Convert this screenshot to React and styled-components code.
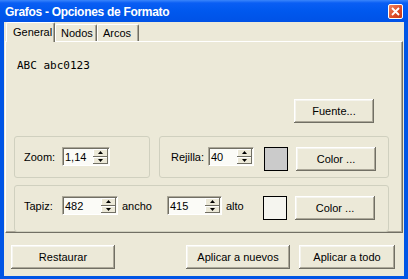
import styled, { createGlobalStyle } from "styled-components";

const Global = createGlobalStyle`
  html, body { margin: 0; padding: 0; background: #ece9d8; }
  body { font-family: "Liberation Sans", Arial, sans-serif; font-size: 11px; color: #000; }
`;

// window frame
const Window = styled.div`
  width: 408px;
  height: 279px;
  display: flex;
  flex-direction: column;
  background: #0055e5;
  box-sizing: border-box;
`;

const TitleBar = styled.div`
  height: 22px;
  flex: none;
  display: flex;
  align-items: center;
  justify-content: space-between;
  box-sizing: border-box;
  padding: 1px 5px 0 5px;
  background: linear-gradient(#3a85fb 0, #0a5ef4 3px, #0058ee 50%, #0052e6 100%);
  color: #fff;
  font-weight: bold;
  font-size: 12px;
  letter-spacing: -0.3px;
`;

const CloseBtn = styled.div`
  width: 13px;
  height: 13px;
  border: 1px solid #fff;
  border-radius: 2px;
  background: linear-gradient(135deg, #f0835f, #dc4a25 60%, #c2381a);
  display: flex;
  align-items: center;
  justify-content: center;
`;

const Body = styled.div`
  flex: 1;
  margin: 0 4px 3px 4px;
  background: #ece9d8;
  display: flex;
  flex-direction: column;
  padding: 0 1px 0 1px;
`;

// tabs
const TabRow = styled.div`
  height: 19px;
  display: flex;
  align-items: flex-end;
  padding-left: 1px;
  position: relative;
  z-index: 1;
`;

const Tab = styled.div`
  width: ${(p) => p.$w}px;
  height: ${(p) => (p.$active ? 20 : 17)}px;
  margin-bottom: ${(p) => (p.$active ? -1 : 0)}px;
  box-sizing: border-box;
  border-top: 1px solid #fff;
  border-left: 1px solid #fff;
  border-right: 1px solid #716f64;
  box-shadow: inset -1px 0 #aca899;
  border-radius: 2px 2px 0 0;
  background: #ece9d8;
  padding: ${(p) => (p.$active ? 3 : 2)}px 0 0 ${(p) => (p.$active ? 6 : 5)}px;
`;

const Panel = styled.div`
  height: 192px;
  box-sizing: border-box;
  border-top: 1px solid #fff;
  border-left: 1px solid #fff;
  border-right: 1px solid #716f64;
  border-bottom: 1px solid #716f64;
  box-shadow: inset -1px -1px #aca899;
  display: flex;
  flex-direction: column;
  padding: 0 13px 0 8px;
`;

const Sample = styled.div`
  margin: 17px 0 0 3px;
  font-family: "DejaVu Sans Mono", monospace;
  font-size: 11px;
  line-height: 13px;
`;

const FontRow = styled.div`
  display: flex;
  justify-content: flex-end;
  padding-right: 15px;
  margin-top: 27px;
`;

const Button = styled.button`
  width: ${(p) => p.$w || 80}px;
  height: 24px;
  flex: none;
  margin: 0;
  padding: 0;
  box-sizing: border-box;
  border: none;
  background: #ece9d8;
  font-family: "Liberation Sans", Arial, sans-serif;
  font-size: 11px;
  color: #000;
  box-shadow: inset -1px -1px #716f64, inset 1px 1px #fff, inset -2px -2px #aca899, inset 2px 2px #f5f4ee;
`;

const GroupRow = styled.div`
  display: flex;
  gap: 9px;
  margin-top: 13px;
`;

const Group = styled.div`
  width: ${(p) => (p.$w ? `${p.$w}px` : "auto")};
  flex: ${(p) => (p.$w ? "none" : 1)};
  height: 42px;
  box-sizing: border-box;
  border: 1px solid #d0d0bf;
  border-radius: 3px;
  margin-top: ${(p) => p.$mt || 0}px;
  display: flex;
  align-items: flex-start;
  padding: 10px 0 0 ${(p) => p.$pl}px;
`;

const Label = styled.div`
  width: ${(p) => p.$w}px;
  flex: none;
  box-sizing: border-box;
  padding-left: ${(p) => p.$pl || 0}px;
  height: 19px;
  line-height: 20px;
`;

const SpinBox = styled.div`
  width: ${(p) => p.$w}px;
  height: 19px;
  flex: none;
  box-sizing: border-box;
  background: #fbfbf7;
  border-top: 1px solid #aca899;
  border-left: 1px solid #aca899;
  border-right: 1px solid #fff;
  border-bottom: 1px solid #fff;
  box-shadow: inset 1px 1px #716f64;
  display: flex;
  align-items: center;
  justify-content: space-between;
  padding: 1px 1px 1px 2px;
`;

const SpinValue = styled.span`
  line-height: 15px;
  padding-top: 1px;
`;

const Arrows = styled.div`
  width: 15px;
  height: 15px;
  display: flex;
  flex-direction: column;
`;

const ArrowBtn = styled.div`
  flex: 1;
  background: #ece9d8;
  box-shadow: inset -1px -1px #716f64, inset 1px 1px #fff;
  display: flex;
  align-items: center;
  justify-content: center;
`;

const Swatch = styled.div`
  width: 24px;
  height: 24px;
  flex: none;
  box-sizing: border-box;
  border: 1px solid #000;
  background: ${(p) => p.$c};
  margin: 0 8px 0 ${(p) => p.$ml}px;
`;

const BottomRow = styled.div`
  display: flex;
  align-items: flex-start;
  padding: 12px 8px 0 6px;
  gap: 9px;
`;

const Spacer = styled.div`
  flex: 1;
`;

function Spin({ value, w }) {
  return (
    <SpinBox $w={w}>
      <SpinValue>{value}</SpinValue>
      <Arrows>
        <ArrowBtn>
          <svg width="5" height="3" viewBox="0 0 5 3"><path d="M2.5 0L5 3H0z" fill="#000" /></svg>
        </ArrowBtn>
        <ArrowBtn>
          <svg width="5" height="3" viewBox="0 0 5 3"><path d="M0 0H5L2.5 3z" fill="#000" /></svg>
        </ArrowBtn>
      </Arrows>
    </SpinBox>
  );
}

export default function App() {
  return (
    <>
      <Global />
      <Window>
        <TitleBar>
          <span>Grafos - Opciones de Formato</span>
          <CloseBtn>
            <svg width="9" height="9" viewBox="0 0 9 9">
              <path d="M1 1L8 8M8 1L1 8" stroke="#fff" strokeWidth="1.8" />
            </svg>
          </CloseBtn>
        </TitleBar>
        <Body>
          <TabRow>
            <Tab $w={49} $active>General</Tab>
            <Tab $w={42}>Nodos</Tab>
            <Tab $w={42}>Arcos</Tab>
          </TabRow>
          <Panel>
            <Sample>ABC abc0123</Sample>
            <FontRow>
              <Button>Fuente...</Button>
            </FontRow>
            <GroupRow>
              <Group $w={136} $pl={9}>
                <Label $w={38}>Zoom:</Label>
                <Spin value="1,14" w={48} />
              </Group>
              <Group $pl={11}>
                <Label $w={37}>Rejilla:</Label>
                <Spin value="40" w={46} />
                <Swatch $c="#cbcbcb" $ml={10} />
                <Button>Color ...</Button>
              </Group>
            </GroupRow>
            <Group $pl={9} $mt={7}>
              <Label $w={38}>Tapiz:</Label>
              <Spin value="482" w={56} />
              <Label $w={49} $pl={4}>ancho</Label>
              <Spin value="415" w={55} />
              <Label $w={41} $pl={4}>alto</Label>
              <Swatch $c="#f5f5ef" $ml={0} />
              <Button>Color ...</Button>
            </Group>
          </Panel>
          <BottomRow>
            <Button $w={104}>Restaurar</Button>
            <Spacer />
            <Button $w={104}>Aplicar a nuevos</Button>
            <Button $w={96}>Aplicar a todo</Button>
          </BottomRow>
        </Body>
      </Window>
    </>
  );
}
